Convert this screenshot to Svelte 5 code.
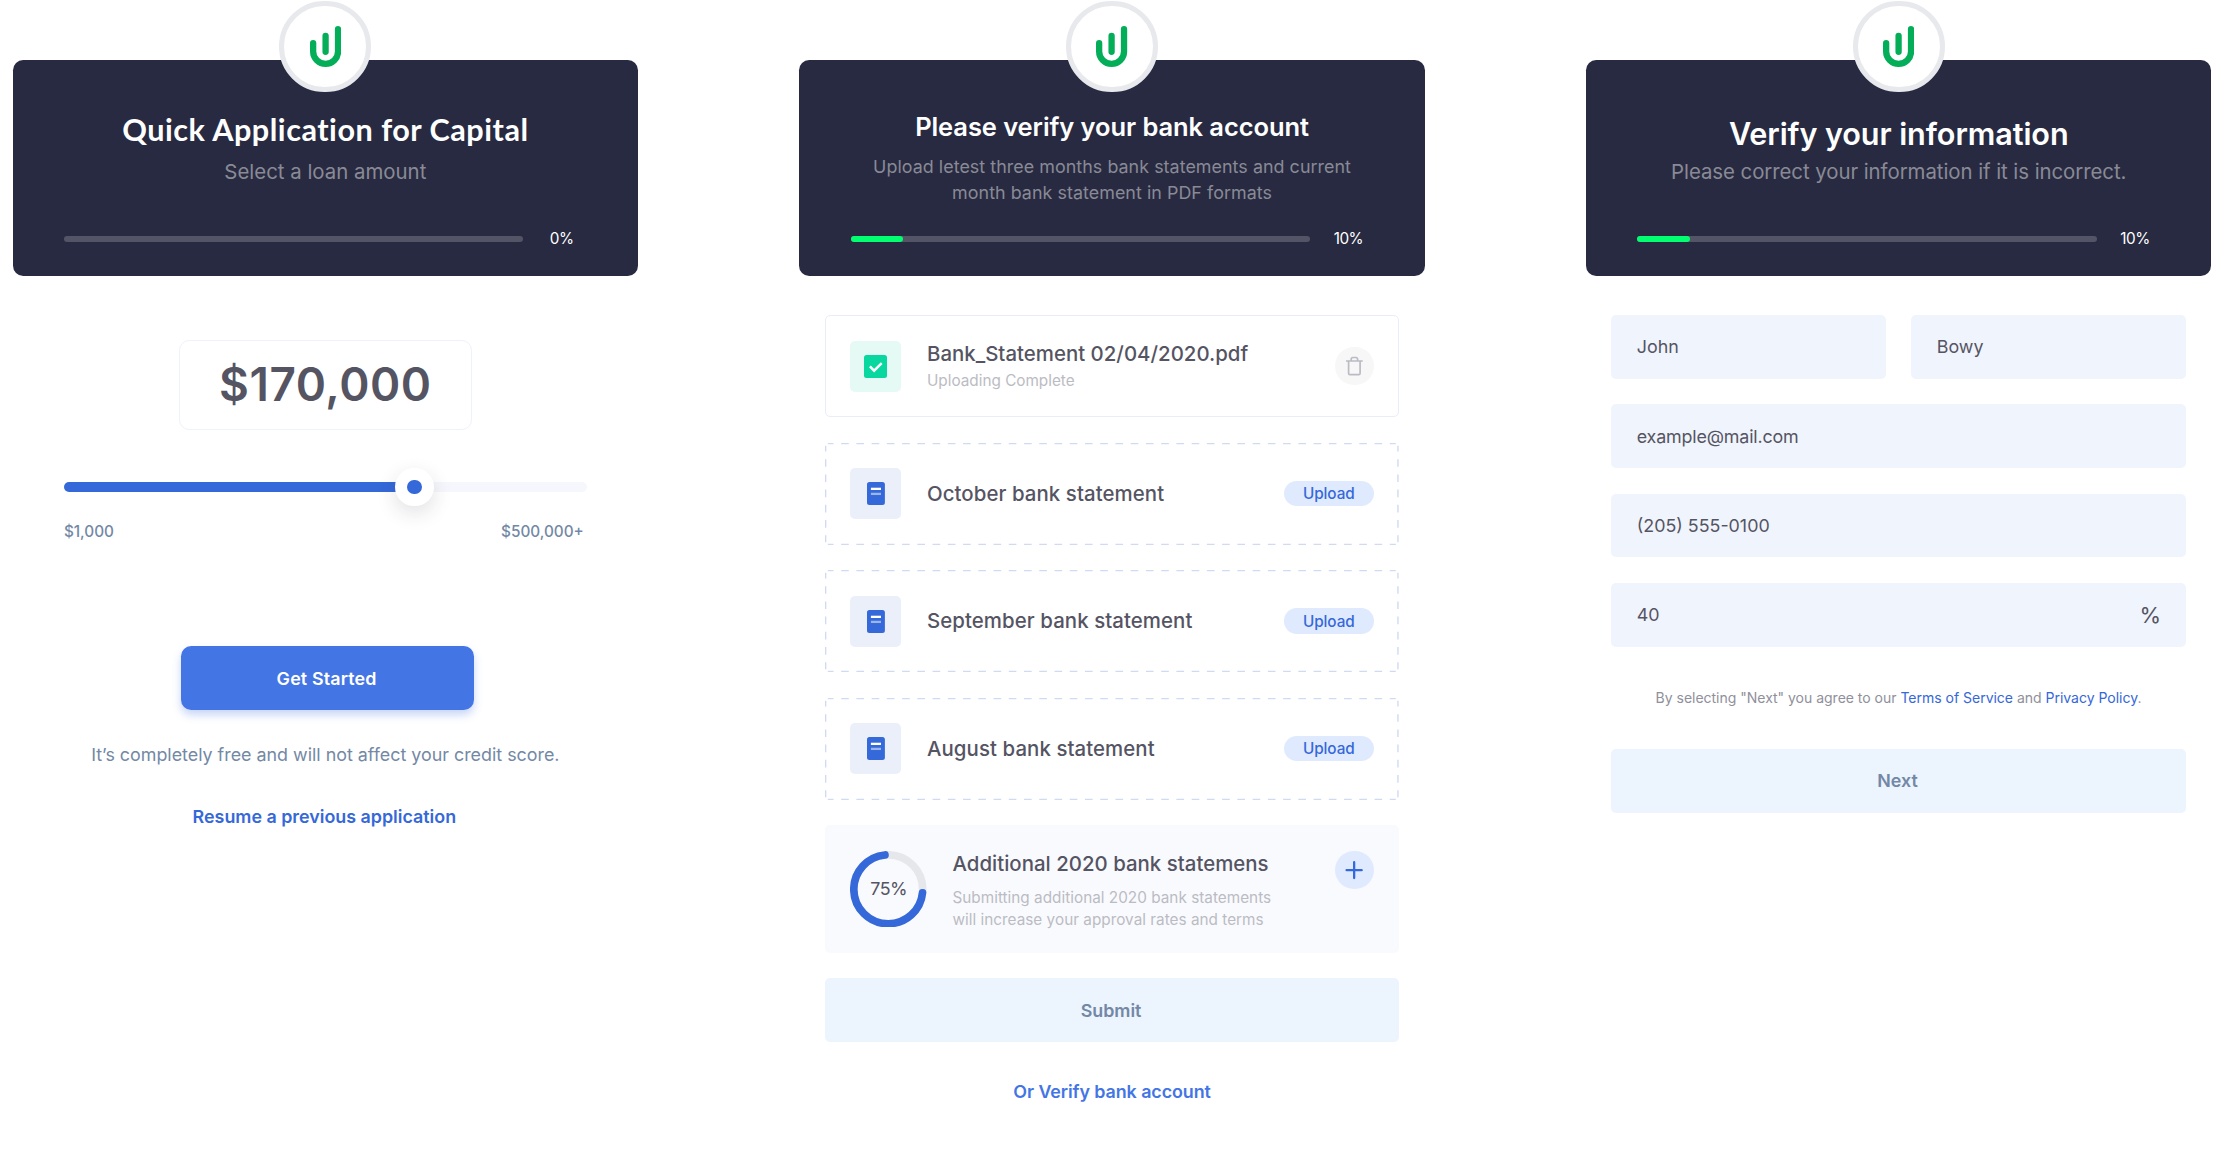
<script>
  const months = ['October', 'September', 'August'];

  // Ring geometry: the arc is shortened at both ends to leave room for the round caps.
  const radius = 34.45;
  const circumference = 2 * Math.PI * radius;
  const uploaded = 75;
  const cap = 3.6;
  const arc = (circumference * uploaded) / 100 - cap * 2;
</script>

{#snippet header(kind, title, lines, percent)}
  <header class="banner {kind}">
    <div class="logo">
      <svg width="31.2" height="41" viewBox="0 0 31.2 41">
        <path d="M3.15 17.1v8.3a12.45 12.45 0 0 0 24.9 0V3.15M15.6 9.85v16" />
      </svg>
    </div>
    <h1>{title}</h1>
    <p>{#each lines as line}<span>{line}</span>{/each}</p>
    <div class="progress">
      <div class="track">
        {#if percent}<div class="fill"></div>{/if}
      </div>
      <b>{percent}%</b>
    </div>
  </header>
{/snippet}

<main>
  <section>
    {@render header('capital', 'Quick Application for Capital', ['Select a loan amount'], 0)}
    <div class="loan">
      <div class="amount">$170,000</div>
      <div class="slider">
        <div class="rail"><div class="range"></div></div>
        <div class="thumb"></div>
      </div>
      <div class="limits"><span>$1,000</span><span>$500,000+</span></div>
      <button class="start">Get Started</button>
      <p class="free">It’s completely free and will not affect your credit score.</p>
      <a class="link resume">Resume a previous application</a>
    </div>
  </section>

  <section>
    {@render header(
      'bank',
      'Please verify your bank account',
      ['Upload letest three months bank statements and current', 'month bank statement in PDF formats'],
      10
    )}
    <div class="content files">
      <article class="file done">
        <div class="badge green">
          <svg width="23" height="23" viewBox="0 0 23 23">
            <rect width="23" height="23" rx="2.5" fill="#08d8a0" />
            <path d="M5.9 11.3l4.2 4.4 7.6-7.6" fill="none" stroke="#fff" stroke-width="2.4" />
          </svg>
        </div>
        <div class="name">
          <h2>Bank_Statement 02/04/2020.pdf</h2>
          <small>Uploading Complete</small>
        </div>
        <button class="round gray" aria-label="Delete">
          <svg width="38.3" height="38.3" viewBox="0 0 38.3 38.3">
            <path d="M11 14h16.7M13.6 14v12.2q0 1.4 1.4 1.4h8.7q1.4 0 1.4-1.4V14M16.2 14v-1.8q0-1.7 1.7-1.7h3q1.7 0 1.7 1.7V14" fill="none" stroke="#bbbbc3" stroke-width="1.7" />
          </svg>
        </button>
      </article>

      {#each months as month}
        <article class="file">
          <svg class="dashes" viewBox="0 0 573.6 102">
            <path d="M2.8 .64h568M2.8 101.36h568M.64 2.8v96.4M572.96 2.8v96.4" />
          </svg>
          <div class="badge">
            <svg width="17.9" height="23" viewBox="0 0 17.9 23">
              <rect width="17.9" height="23" rx="2.5" fill="#3568d8" />
              <path d="M3.9 6.85h10.1" stroke="#fff" stroke-width="2.3" />
              <path d="M3.9 11.9h10.1" stroke="#fff" stroke-opacity=".5" stroke-width="2.3" />
            </svg>
          </div>
          <h2>{month} bank statement</h2>
          <button class="pill">Upload</button>
        </article>
      {/each}

      <article class="extra">
        <div class="ring">
          <svg width="76.5" height="76.5" viewBox="-38.25 -38.25 76.5 76.5">
            <circle r={radius} stroke="#e6e7ea" />
            <circle r={radius} stroke="#3568d8" stroke-linecap="round" stroke-dasharray="{arc} {circumference}" stroke-dashoffset={-cap} />
          </svg>
          <span>75%</span>
        </div>
        <div class="info">
          <h2>Additional 2020 bank statemens</h2>
          <p><span>Submitting additional 2020 bank statements</span><span>will increase your approval rates and terms</span></p>
        </div>
        <button class="round blue" aria-label="Add">
          <svg width="38.3" height="38.3" viewBox="0 0 38.3 38.3">
            <path d="M11.6 19.15h15.1M19.15 11.2v15.9" stroke="#3568d8" stroke-width="2.3" stroke-linecap="round" />
          </svg>
        </button>
      </article>

      <button class="wide submit">Submit</button>
      <a class="link verify">Or Verify bank account</a>
    </div>
  </section>

  <section>
    {@render header('info-step', 'Verify your information', ['Please correct your information if it is incorrect.'], 10)}
    <div class="content form">
      <div class="pair">
        <div class="field">John</div>
        <div class="field">Bowy</div>
      </div>
      <div class="field email">example@mail.com</div>
      <div class="field">(205) 555-0100</div>
      <div class="field"><span>40</span><i>%</i></div>
      <p class="terms">By selecting "Next" you agree to our <a>Terms of Service</a> and <a>Privacy Policy</a>.</p>
      <button class="wide">Next</button>
    </div>
  </section>
</main>

<style>
  :global(body) {
    background: #fff;
    overflow: hidden;
  }

  main {
    display: grid;
    grid-template-columns: repeat(3, 625.3px);
    column-gap: 161.4px;
    padding: 59.7px 0 0 12.7px;
    height: 1095px;
    font-family: Inter, 'Liberation Sans', sans-serif;
    color: #555463;
  }

  h1, h2, p { margin: 0; }
  span { white-space: nowrap; }

  button {
    border: 0;
    padding: 0;
    font-family: inherit;
    display: block;
  }

  /* Banner */
  .banner {
    position: relative;
    box-sizing: border-box;
    height: 216.8px;
    padding: 49.3px 51.2px 27.7px;
    border-radius: 10.2px;
    background: #282a41;
    display: flex;
    flex-direction: column;
    text-align: center;
  }

  .logo {
    position: absolute;
    top: -59px;
    left: 266.7px;
    box-sizing: border-box;
    width: 91.8px;
    height: 91.8px;
    border: 5.1px solid #e8e9ed;
    border-radius: 50%;
    background: #fff;
    display: flex;
    align-items: center;
    justify-content: center;
  }

  .logo path {
    fill: none;
    stroke: #04ae58;
    stroke-width: 6.3;
    stroke-linecap: round;
  }

  h1 {
    color: #fff;
    font-size: 30.6px;
    line-height: 40px;
    font-weight: 600;
    letter-spacing: -0.08px;
  }

  .banner p {
    margin-top: 7.4px;
    font-size: 20.4px;
    line-height: 30px;
    color: #898a96;
  }

  .banner p span { display: block; }

  .capital { padding-top: 50.3px; }

  .capital h1 {
    font-family: Lato, sans-serif;
    font-weight: 700;
    letter-spacing: 0.51px;
  }

  .bank h1 { font-size: 25.5px; line-height: 36px; }

  .bank p {
    margin-top: 9.2px;
    font-size: 17.86px;
    line-height: 26px;
    letter-spacing: 0.05px;
  }

  .info-step { padding-top: 54px; }

  .info-step p { margin-top: 3.7px; letter-spacing: -0.056px; }

  .progress {
    margin-top: auto;
    height: 20px;
    display: flex;
    align-items: center;
  }

  .track {
    flex: none;
    width: 459.3px;
    height: 6.4px;
    border-radius: 3.2px;
    background: #535466;
  }

  .fill {
    width: 52.3px;
    height: 100%;
    border-radius: 3.2px;
    background: #02ff70;
  }

  .progress b {
    flex: none;
    margin-left: 12px;
    width: 53px;
    font-size: 15.3px;
    line-height: 20px;
    font-weight: 400;
    letter-spacing: -0.5px;
    color: #fff;
  }

  /* Loan amount */
  .loan {
    padding: 64px 51.2px 0;
    display: flex;
    flex-direction: column;
  }

  .amount {
    align-self: center;
    box-sizing: border-box;
    width: 293.4px;
    height: 89.3px;
    border: 1px solid #eff1fd;
    border-radius: 10.2px;
    font-size: 45.9px;
    line-height: 88px;
    font-weight: 600;
    letter-spacing: 0.55px;
    text-align: center;
  }

  .slider {
    position: relative;
    margin-top: 38.2px;
    height: 38.3px;
    display: flex;
    align-items: center;
  }

  .rail {
    width: 100%;
    height: 10.2px;
    border-radius: 5.1px;
    background: #f5f7fc;
  }

  .range {
    width: 350.8px;
    height: 100%;
    border-radius: 5.1px;
    background: #3568d8;
  }

  .thumb {
    position: absolute;
    left: 331.6px;
    top: 0;
    box-sizing: border-box;
    width: 38.3px;
    height: 38.3px;
    border: 12.75px solid #fff;
    border-radius: 50%;
    background: #3568d8;
    box-shadow: 0 7px 20px rgba(40, 42, 65, 0.14);
  }

  .limits {
    margin-top: 16px;
    padding: 0 3px 0 0;
    display: flex;
    justify-content: space-between;
    font-size: 15.3px;
    line-height: 20px;
    font-weight: 500;
    color: #7388a5;
  }

  .start {
    margin: 104px 0 0 117px;
    width: 293.4px;
    height: 63.8px;
    padding-right: 2px;
    border-radius: 10.2px;
    background: #4475e5;
    box-shadow: 0 5px 9px rgba(68, 117, 229, 0.3);
    color: #fff;
    font-size: 17.86px;
    font-weight: 600;
    letter-spacing: 0.15px;
  }

  .free {
    margin-top: 32.4px;
    text-align: center;
    font-size: 17.86px;
    line-height: 26px;
    color: #7388a5;
  }

  .link {
    display: block;
    text-align: center;
    font-size: 17.86px;
    line-height: 26px;
    font-weight: 600;
    color: #3568d8;
  }

  .resume { margin-top: 36px; padding-right: 2px; }

  /* Bank statements */
  .content { padding: 38.6px 25.6px 0; }

  .files, .form {
    display: flex;
    flex-direction: column;
    gap: 25.5px;
  }

  .file {
    position: relative;
    box-sizing: border-box;
    height: 102px;
    padding: 0 25.5px;
    display: flex;
    align-items: center;
  }

  .done {
    border: 1px solid #e9edf9;
    border-radius: 5.1px;
    padding: 0 24.5px;
  }

  .dashes {
    position: absolute;
    inset: 0;
    width: 573.6px;
    height: 102px;
  }

  .dashes path {
    fill: none;
    stroke: #d0daf5;
    stroke-width: 1.4;
    stroke-dasharray: 7.64 7.6;
    stroke-dashoffset: 1.9;
  }

  .badge {
    width: 51px;
    height: 51px;
    border-radius: 5.1px;
    background: #ebeffa;
    display: flex;
    align-items: center;
    justify-content: center;
  }

  .green { background: #e5faf5; }

  h2 {
    font-size: 20.4px;
    line-height: 28px;
    font-weight: 500;
    letter-spacing: 0.02px;
  }

  .file > h2, .name {
    flex: 1;
    margin-left: 25.5px;
  }

  .file > h2 { letter-spacing: 0.08px; }

  small {
    display: block;
    margin-top: 2px;
    font-size: 15.3px;
    line-height: 22px;
    color: #bbbcc3;
  }

  .name { margin-top: -1px; }

  .round {
    width: 38.3px;
    height: 38.3px;
    border-radius: 50%;
  }

  .round svg { display: block; }
  .gray { background: #f7f7f8; }
  .blue { background: #e0eaff; }

  .pill {
    width: 89.5px;
    height: 25.5px;
    border-radius: 12.75px;
    background: #e0eaff;
    color: #3568d8;
    font-size: 15.3px;
    font-weight: 500;
    letter-spacing: -0.05px;
  }

  .extra {
    box-sizing: border-box;
    height: 127.6px;
    padding: 25.5px;
    border-radius: 5.1px;
    background: #f9fafe;
    display: flex;
    align-items: flex-start;
  }

  .ring {
    width: 76.5px;
    height: 76.5px;
    display: grid;
    place-items: center;
    font-size: 17.86px;
    line-height: 26px;
    letter-spacing: -0.5px;
  }

  .ring > * { grid-area: 1 / 1; }

  .ring circle {
    fill: none;
    stroke-width: 7.65;
  }

  .info { flex: 1; margin-left: 25.5px; }
  .info h2 { margin-top: 0.4px; line-height: 26px; letter-spacing: 0.02px; }

  .info p {
    margin-top: 9.6px;
    font-size: 15.3px;
    line-height: 22.3px;
    letter-spacing: 0.02px;
    color: #bbbcc3;
  }

  .info p span { display: block; }

  .wide {
    width: 100%;
    height: 63.8px;
    border-radius: 5.1px;
    background: #ecf4fe;
    color: #7388a5;
    font-size: 17.86px;
    font-weight: 600;
  }

  .submit { padding-right: 2px; }

  .verify {
    margin-top: 11.2px;
    letter-spacing: -0.07px;
    color: #4475e5;
  }

  /* Applicant details */
  .form { padding-left: 25.2px; }

  .pair {
    display: grid;
    grid-template-columns: 1fr 1fr;
    column-gap: 25.5px;
  }

  .field {
    box-sizing: border-box;
    height: 63.8px;
    padding: 0 25.5px;
    border-radius: 5.1px;
    background: #f0f4fc;
    display: flex;
    align-items: center;
    justify-content: space-between;
    font-size: 17.86px;
  }

  .email { letter-spacing: -0.16px; }

  .field i {
    margin-right: -0.8px;
    font-style: normal;
    font-size: 22px;
  }

  .terms {
    margin-top: 14.8px;
    text-align: center;
    font-size: 14.03px;
    line-height: 22px;
    letter-spacing: -0.02px;
    color: #8f909b;
  }

  .terms a { color: #3568d8; }
  .terms + .wide { margin-top: 14.3px; padding-right: 2px; }
</style>
